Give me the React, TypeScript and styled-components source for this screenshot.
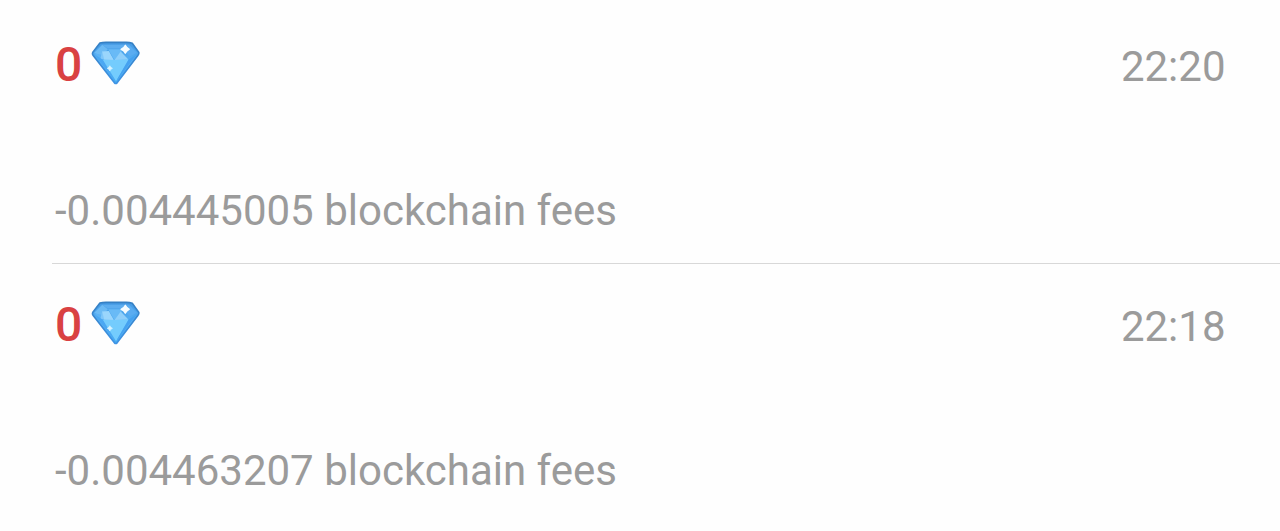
import styled, { createGlobalStyle } from "styled-components";

const GlobalStyle = createGlobalStyle`
    body {
        margin: 0;
        background: #fefefe;
        font-family: Roboto, sans-serif;
    }
`;

interface ITransaction {
    id: number;
    amount: string;
    time: string;
    fee: string;
}

const transactions: ITransaction[] = [
    { id: 1, amount: "0", time: "22:20", fee: "-0.004445005" },
    { id: 2, amount: "0", time: "22:18", fee: "-0.004463207" },
];

const List = styled.main`
    height: 531px;
    padding: 4px 0 0 52px;
    box-sizing: border-box;
    overflow: hidden;
`;

const Item = styled.article`
    height: 260px;
    padding: 33px 54.5px 0 3px;
    box-sizing: border-box;
    color: #9b9b9b;
    font-size: 42px;
    line-height: 50px;

    &:not(:last-child) {
        border-bottom: 1px solid #d8d8d8;
    }
`;

const Header = styled.header`
    display: flex;
    align-items: baseline;
    justify-content: space-between;
    height: 56px;
`;

const Amount = styled.div`
    display: flex;
    gap: 9px;
    color: #d94142;
    font-size: 48px;
    font-weight: 500;
    line-height: 55px;
`;

const GemIcon = styled.svg`
    width: 49.5px;
    height: 44.5px;
    margin-top: 4px;
`;

const Fee = styled.div`
    margin-top: 93px;
    white-space: nowrap;
`;

const Gem = ({ id }: { id: string }) => (
    <GemIcon viewBox="0 0 150 135" aria-hidden="true">
        <defs>
            <linearGradient id={`body-${id}`} x1="0" y1="0" x2="0" y2="1">
                <stop offset="0" stopColor="#4599e3" />
                <stop offset="0.5" stopColor="#55b2f5" />
                <stop offset="1" stopColor="#45a9f0" />
            </linearGradient>
            <linearGradient id={`edge-${id}`} x1="0" y1="0" x2="0" y2="1">
                <stop offset="0" stopColor="#3580c4" />
                <stop offset="1" stopColor="#3f93e4" />
            </linearGradient>
        </defs>
        <path
            d="M27 6Q34 4 45 4H107Q118 4 125 7L145 35Q146 39 142 44L79 127Q75 131 71 127L6 43Q3 39 5 35Z"
            fill={`url(#body-${id})`}
            stroke={`url(#edge-${id})`}
            strokeWidth="5"
            strokeLinejoin="round"
        />
        <path d="M34 11H115L98 23H50Z" fill="#5dadef" />
        <path d="M34 11L51 25L33 47L10 36Z" fill="#6cbaf4" />
        <path d="M115 11L139 36L117 47L97 23Z" fill="#5aacf1" />
        <path d="M10 37L33 42L38 58L28 60Z" fill="#5cb2f4" />
        <path d="M34 30L66 57L28 55Z" fill="#7fc6f9" />
        <path d="M34 32L54 30L69 58L40 57Z" fill="#9ad5fc" />
        <path d="M52 25H98L71 57Z" fill="#69baf6" />
        <path d="M90 32L114 57L71 58Z" fill="#8fcffa" />
        <path d="M10 40L36 57L73 122Z" fill="#4ba8f3" />
        <path d="M36 57L75 58L114 56L76 122Z" fill="#74ccfd" />
        <path d="M114 56L139 40L76 122Z" fill="#45a1f0" />
        <path d="M104 13L109 20L116 25L109 30L104 37L99 30L91 25L99 20Z" fill="#f5fcff" stroke="#f5fcff" strokeWidth="4" strokeLinejoin="round" />
        <path d="M57 75L60 80L65 83L60 86L57 91L54 86L49 83L54 80Z" fill="#d9f4ff" stroke="#d9f4ff" strokeWidth="2" />
    </GemIcon>
);

const Transaction = ({ id, amount, time, fee }: ITransaction) => (
    <Item>
        <Header>
            <Amount>
                {amount}
                <Gem id={`gem-${id}`} />
            </Amount>
            <time>{time}</time>
        </Header>
        <Fee>{fee} blockchain fees</Fee>
    </Item>
);

export default function App() {
    return (
        <>
            <GlobalStyle />
            <List>
                {transactions.map(tx => <Transaction key={tx.id} {...tx} />)}
            </List>
        </>
    );
}
